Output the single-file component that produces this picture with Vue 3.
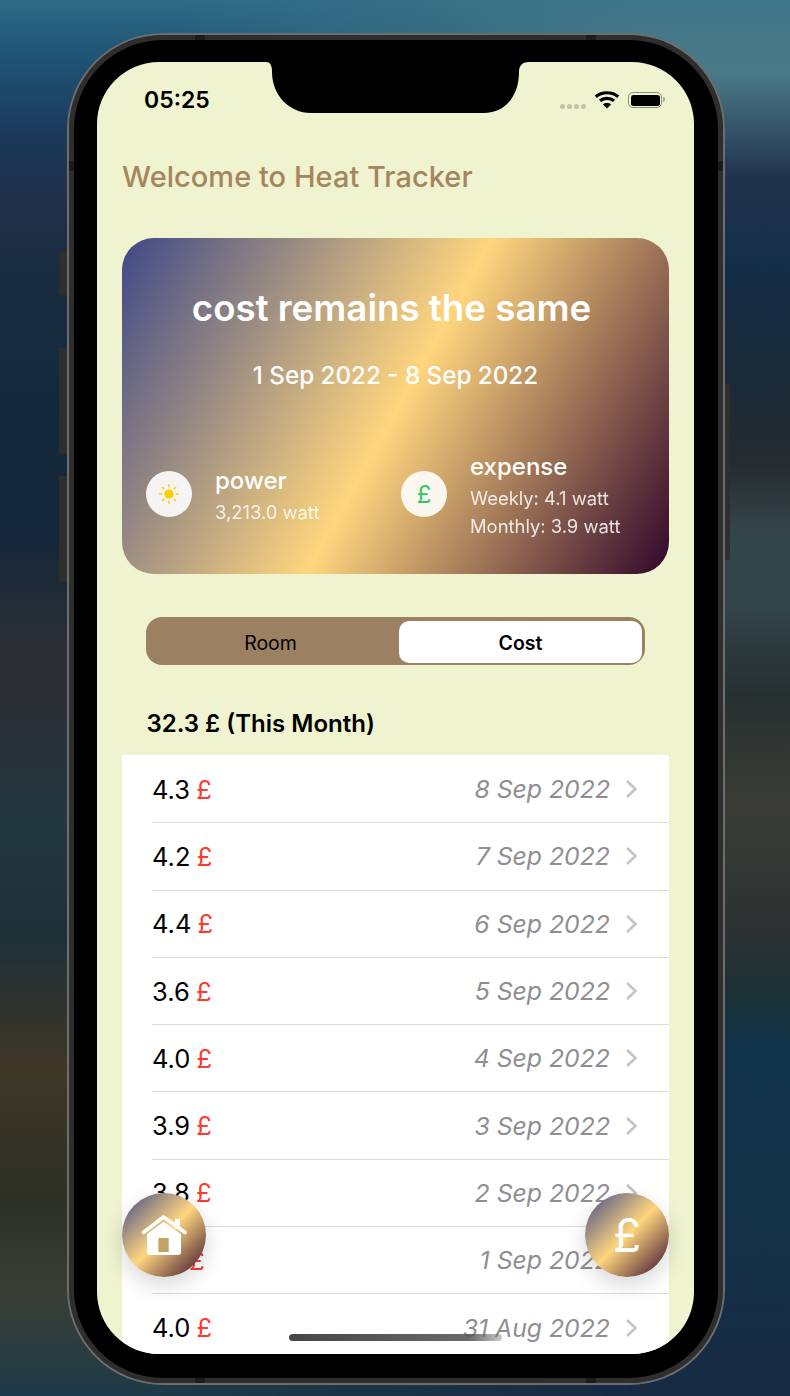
<script setup>
const rows = [
  { value: '4.3', date: '8 Sep 2022' },
  { value: '4.2', date: '7 Sep 2022' },
  { value: '4.4', date: '6 Sep 2022' },
  { value: '3.6', date: '5 Sep 2022' },
  { value: '4.0', date: '4 Sep 2022' },
  { value: '3.9', date: '3 Sep 2022' },
  { value: '3.8', date: '2 Sep 2022' },
  { value: '4.1', date: '1 Sep 2022' },
  { value: '4.0', date: '31 Aug 2022' }
]

const sunRays = [0, 45, 90, 135, 180, 225, 270, 315]
</script>

<template>
  <div class="page">
    <div class="phone">
      <span class="side-btn btn-mute"></span>
      <span class="side-btn btn-up"></span>
      <span class="side-btn btn-down"></span>
      <span class="side-btn btn-power"></span>
      <span class="band band-top-l"></span>
      <span class="band band-top-r"></span>
      <span class="band band-bottom-l"></span>
      <span class="band band-bottom-r"></span>
      <span class="band band-left"></span>
      <span class="band band-right"></span>

      <div class="screen">
        <svg class="notch" width="263" height="52" viewBox="0 0 263 52">
          <path d="M0 0H263C257 0 253 3 253 10C253 33 240 51 218 51H45C23 51 6 33 6 10C6 3 4 0 0 0Z" fill="#000" />
        </svg>

        <div class="status-bar">
          <span class="time">05:25</span>
          <div class="status-icons">
            <span class="signal"><i></i><i></i><i></i><i></i></span>
            <svg class="wifi" width="26" height="19" viewBox="0 0 26 19">
              <path d="M1.800 6.800C7.800 1.400 18.200 1.400 24.200 6.800" fill="none" stroke="#000" stroke-width="3.200" />
              <path d="M6 10.800C9.800 7.600 16.200 7.600 20 10.800" fill="none" stroke="#000" stroke-width="3.200" />
              <path d="M13 18.400L8.800 14.200C11 12.500 15 12.500 17.200 14.200Z" fill="#000" />
            </svg>
            <span class="battery"><i></i></span>
            <span class="battery-nub"></span>
          </div>
        </div>

        <h1 class="welcome">Welcome to Heat Tracker</h1>

        <section class="summary">
          <h2>cost remains the same</h2>
          <p class="range">1 Sep 2022 - 8 Sep 2022</p>
          <div class="stats">
            <div class="stat">
              <span class="stat-icon">
                <svg width="22" height="22" viewBox="0 0 22 22">
                  <circle cx="11" cy="11" r="4.600" fill="#ffcc00" />
                  <rect
                    v-for="deg in sunRays"
                    :key="deg"
                    x="10.200"
                    y="1"
                    width="1.600"
                    height="3.400"
                    rx="0.800"
                    fill="#ffcc00"
                    :transform="`rotate(${deg} 11 11)`"
                  />
                </svg>
              </span>
              <div class="stat-text">
                <div class="stat-title">power</div>
                <div class="stat-line">3,213.0 watt</div>
              </div>
            </div>
            <div class="stat">
              <span class="stat-icon pound">£</span>
              <div class="stat-text">
                <div class="stat-title">expense</div>
                <div class="stat-line">Weekly: 4.1 watt</div>
                <div class="stat-line">Monthly: 3.9 watt</div>
              </div>
            </div>
          </div>
        </section>

        <div class="segmented">
          <button type="button" class="segment">Room</button>
          <button type="button" class="segment active">Cost</button>
        </div>

        <div class="month-total">32.3 £ (This Month)</div>

        <ul class="cost-list">
          <li v-for="row in rows" :key="row.date" class="cost-row">
            <span class="amount">{{ row.value }} <em>£</em></span>
            <span class="date">{{ row.date }}</span>
            <svg class="chevron" width="13" height="20" viewBox="0 0 13 20">
              <path d="M2 2L10.500 10L2 18" fill="none" stroke="#c4c4c6" stroke-width="2.600" />
            </svg>
          </li>
        </ul>

        <button type="button" class="fab fab-home" aria-label="Home">
          <svg width="46" height="42" viewBox="0 0 46 42">
            <path d="M2.500 18.500L22.500 3L44 18.500" fill="none" stroke="#fff" stroke-width="3.600" stroke-linecap="round" stroke-linejoin="round" />
            <rect x="34" y="5" width="5" height="10" fill="#fff" />
            <path
              fill-rule="evenodd"
              d="M6 20L22.500 7.800L40 20V38A3 3 0 0 1 37 41H9A3 3 0 0 1 6 38ZM17.500 24V38H27.500V24Z"
              fill="#fff"
            />
            <rect x="17.500" y="24" width="10" height="14" fill="#c2a267" />
          </svg>
        </button>
        <button type="button" class="fab fab-cost">£</button>

        <span class="home-bar"></span>
      </div>
    </div>
  </div>
</template>

<style>
html,
body {
  margin: 0;
  background: #16303f;
}
</style>

<style scoped>
.page {
  position: relative;
  width: 790px;
  height: 1396px;
  overflow: hidden;
  padding: 33px 0 0 67px;
  box-sizing: border-box;
  font-family: Inter, "Liberation Sans", sans-serif;
  background: linear-gradient(180deg, #3f7588 0, #4a7a88 71px, #3a5c70 116px, #20334d 178px, #142d48 267px, #1a2a36 383px, #262b2f 463px, #35464b 534px, #33444a 605px, #26302f 695px, #3b3c38 801px, #2b3231 935px, #1a3035 997px, #103248 1042px, #123248 1202px, #172a44 1396px);
}

/* left side of the blurred wallpaper, fades into the right side */
.page::before {
  content: "";
  position: absolute;
  inset: 0;
  background: linear-gradient(180deg, #2e6a85 0, #1f5577 53px, #1b3a5a 134px, #20304a 196px, #1a2c40 267px, #142a3c 400px, #15273a 534px, #2a2e35 641px, #2a2f36 712px, #243840 820px, #1e3037 935px, #3e3727 1069px, #2d3026 1202px, #3a3e35 1291px, #1d3a48 1396px);
  -webkit-mask-image: linear-gradient(90deg, #000 20%, transparent 80%);
  mask-image: linear-gradient(90deg, #000 20%, transparent 80%);
}

.phone {
  position: relative;
  z-index: 1;
  width: 658px;
  height: 1352px;
  box-sizing: border-box;
  padding: 27px 29px 29px 28px;
  background: #000;
  border: 2px solid #6d6d6d;
  border-radius: 96px;
  box-shadow: inset 0 0 0 5px #2e2e2e;
}

.side-btn {
  position: absolute;
  background: #2e2e2e;
  border-radius: 2px 0 0 2px;
}

.btn-mute {
  left: -10px;
  top: 216px;
  width: 8px;
  height: 44px;
}

.btn-up {
  left: -10px;
  top: 313px;
  width: 8px;
  height: 106px;
}

.btn-down {
  left: -10px;
  top: 441px;
  width: 8px;
  height: 106px;
}

.btn-power {
  right: -7px;
  top: 349px;
  width: 5px;
  height: 176px;
  border-radius: 0 2px 2px 0;
}

.band {
  position: absolute;
  background: #1c1c1c;
}

.band-top-l,
.band-top-r,
.band-bottom-l,
.band-bottom-r {
  width: 10px;
  height: 5px;
}

.band-top-l {
  top: 0;
  left: 126px;
}

.band-top-r {
  top: 0;
  left: 517px;
}

.band-bottom-l {
  bottom: 0;
  left: 126px;
}

.band-bottom-r {
  bottom: 0;
  left: 517px;
}

.band-left,
.band-right {
  top: 126px;
  width: 5px;
  height: 10px;
}

.band-left {
  left: 0;
}

.band-right {
  right: 0;
}

.screen {
  position: relative;
  width: 597px;
  height: 1292px;
  overflow: hidden;
  background: #eff3cf;
  border-radius: 62px;
}

.notch {
  position: absolute;
  top: 0;
  left: 169px;
  z-index: 5;
}

.status-bar {
  display: flex;
  align-items: flex-start;
  justify-content: space-between;
  height: 52px;
  padding: 25px 29px 0 47px;
  box-sizing: border-box;
}

.time {
  font-size: 23px;
  line-height: 26px;
  font-weight: 600;
  color: #000;
}

.status-icons {
  display: flex;
  align-items: flex-start;
  padding-top: 3px;
}

.signal {
  display: flex;
  gap: 2px;
  margin: 14px 8px 0 0;
}

.signal i {
  width: 5px;
  height: 5px;
  border-radius: 50%;
  background: #bfc4ac;
}

.wifi {
  margin-right: 8px;
}

.battery {
  display: block;
  width: 34px;
  height: 16px;
  margin-top: 2px;
  box-sizing: border-box;
  padding: 1.500px;
  border: 1.500px solid #8b8c74;
  border-radius: 5px;
}

.battery i {
  display: block;
  height: 100%;
  background: #000;
  border-radius: 2.500px;
}

.battery-nub {
  width: 2px;
  height: 5px;
  margin: 7px 0 0 1px;
  background: #a5a790;
  border-radius: 0 2px 2px 0;
}

.welcome {
  margin: 43px 0 0 25px;
  font-size: 29px;
  line-height: 40px;
  font-weight: 500;
  letter-spacing: 0.030px;
  color: #a6855e;
}

.summary {
  height: 336px;
  margin: 41px 25px 0;
  box-sizing: border-box;
  padding-top: 47px;
  color: #fff;
  text-align: center;
  background: linear-gradient(119deg, #3e4887 0%, #ffd67e 50.500%, #30062a 100%);
  border-radius: 32px;
}

.summary h2 {
  margin: 0;
  padding-right: 8px;
  font-size: 36.700px;
  line-height: 46px;
  font-weight: 600;
}

.range {
  margin: 30px 0 0;
  font-size: 24.200px;
  line-height: 30px;
  font-weight: 500;
}

.stats {
  display: grid;
  grid-template-columns: 255px 1fr;
  align-items: center;
  height: 92px;
  margin-top: 57px;
  padding-left: 24px;
  text-align: left;
}

.stat {
  display: flex;
  align-items: center;
  gap: 23px;
}

.stat-icon {
  display: flex;
  flex: none;
  align-items: center;
  justify-content: center;
  width: 46px;
  height: 46px;
  background: rgba(255, 255, 255, 0.9);
  border-radius: 50%;
}

.pound {
  font-size: 24px;
  color: #34c759;
}

.stat-text {
  padding-top: 4px;
}

.stat-title {
  margin-bottom: 2px;
  font-size: 24px;
  line-height: 30px;
  font-weight: 500;
}

.stat-line {
  font-size: 18.400px;
  line-height: 28px;
  opacity: 0.85;
}

.segmented {
  display: flex;
  height: 48px;
  margin: 43px 49px 0;
  box-sizing: border-box;
  padding: 4px 3px 2px 0;
  background: #9c8062;
  border-radius: 16px;
}

.segment {
  flex: 1;
  padding: 1px 4px 0 0;
  font-family: inherit;
  font-size: 19.500px;
  font-weight: 400;
  color: #000;
  background: transparent;
  border: none;
  border-radius: 10px;
}

.segment.active {
  flex: none;
  width: 243px;
  padding: 1px 0 0;
  font-weight: 600;
  background: #fff;
}

.month-total {
  margin: 44px 0 0 49.500px;
  font-size: 24px;
  line-height: 30px;
  font-weight: 600;
  color: #000;
}

.cost-list {
  width: 547px;
  margin: 16px 25px 0;
  padding: 1px 0 0;
  list-style: none;
  background: #fff;
}

.cost-row {
  display: flex;
  align-items: center;
  height: 67.300px;
  box-sizing: border-box;
  margin-left: 30px;
  padding: 0 31px 0 0;
  border-bottom: 1px solid #dcdcdc;
}

.amount {
  flex: 1;
  font-size: 25.500px;
  word-spacing: -1px;
  color: #000;
}

.amount em {
  font-style: normal;
  color: #ff3b30;
}

.date {
  font-size: 24.800px;
  font-style: italic;
  color: #8e8e93;
}

.chevron {
  margin-left: 15px;
}

.fab {
  position: absolute;
  top: 1131px;
  display: flex;
  align-items: center;
  justify-content: center;
  width: 84px;
  height: 84px;
  padding: 0;
  color: #fff;
  background: linear-gradient(135deg, #3e4887 0%, #ffd67e 50%, #30062a 100%);
  border: none;
  border-radius: 50%;
  box-shadow: 0 8px 22px rgba(0, 0, 0, 0.16);
}

.fab-home {
  left: 25px;
}

.fab-cost {
  left: 488px;
  font-family: inherit;
  font-size: 46px;
  font-weight: 400;
}

.home-bar {
  position: absolute;
  left: 192px;
  top: 1272px;
  width: 213px;
  height: 7px;
  background: linear-gradient(90deg, rgba(50, 50, 50, 0.9), rgba(90, 90, 90, 0.9) 85%, rgba(120, 120, 120, 0.4));
  border-radius: 4px;
}
</style>
